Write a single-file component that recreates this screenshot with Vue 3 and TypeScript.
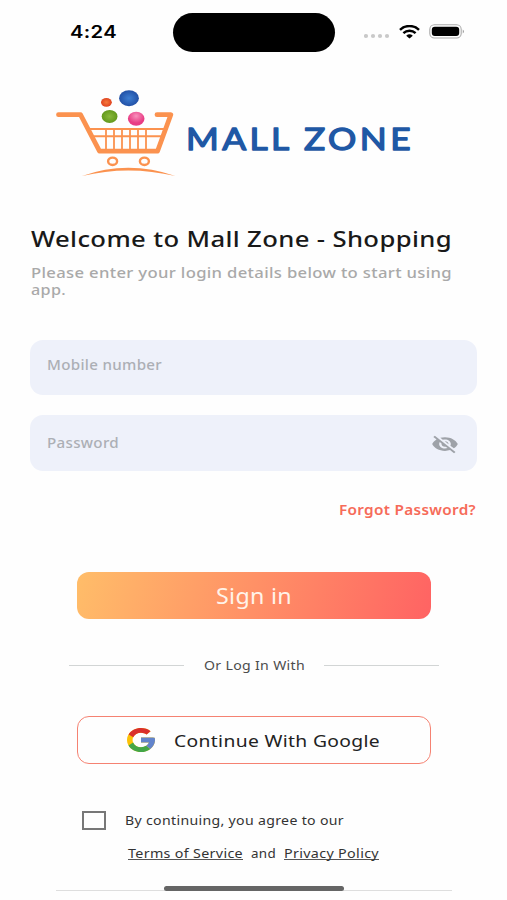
<script setup lang="ts">
import { h, ref, type FunctionalComponent } from 'vue'

interface LineProps {
  text: string
  width: number
  size: number
}

// One line of wide type: fills the given width, its baseline on the box's bottom edge.
const WideText: FunctionalComponent<LineProps> = ({ text, width, size }) =>
  h('svg', { class: 'wide', width, height: size, 'font-size': size }, [
    h('text', { x: 0, y: size, textLength: width, lengthAdjust: 'spacingAndGlyphs' }, text),
  ])
WideText.props = ['text', 'width', 'size']

const agreed = ref(false)
const signalDots = [2, 9, 16, 23]
const basketBars = [106, 114, 122, 130, 138, 146]
</script>

<template>
  <main class="screen">
    <header class="status">
      <WideText class="time" text="4:24" :width="47" :size="17" />
      <div class="island"></div>
      <svg class="dots" width="26" height="6" viewBox="0 0 26 6">
        <circle v-for="x in signalDots" :key="x" :cx="x" cy="3" r="2.1" fill="#c9c9c9" />
      </svg>
      <svg class="wifi" width="21" height="14" viewBox="0 0 21 14" fill="none" stroke="#000">
        <path d="M1 4.8C6.2-.2 14.8-.2 20 4.8" stroke-width="2.5" />
        <path d="M4.4 8.1C7.8 4.9 13.2 4.9 16.6 8.1" stroke-width="2.4" />
        <path d="M7.2 10.7Q10.5 8 13.8 10.7L10.5 13.6Z" fill="#000" stroke="none" />
      </svg>
      <svg class="battery" width="36" height="15" viewBox="0 0 36 15">
        <rect x=".8" y=".8" width="31.4" height="13.2" rx="4.6" fill="#fff" stroke="#aaa" stroke-width="1.1" />
        <rect x="2.8" y="2.7" width="27.4" height="9.4" rx="3" />
        <path d="M33.8 5.5q2 2 0 4z" fill="#888" />
      </svg>
    </header>

    <div class="brand">
      <svg width="120" height="88" viewBox="56 90 120 88" fill="none" stroke="#fb924f">
        <defs>
          <radialGradient id="blue"><stop offset="0" stop-color="#3d7ed2" /><stop offset="1" stop-color="#2150a6" /></radialGradient>
          <radialGradient id="green"><stop offset="0" stop-color="#89b83b" /><stop offset="1" stop-color="#63991c" /></radialGradient>
          <radialGradient id="pink" cy=".3"><stop offset="0" stop-color="#f891bd" /><stop offset="1" stop-color="#e83c84" /></radialGradient>
          <radialGradient id="red"><stop offset="0" stop-color="#f5793c" /><stop offset="1" stop-color="#e04420" /></radialGradient>
        </defs>
        <path d="M58.5 114.7H80.5L99.5 151.2H157.5L170.8 114.7H157" stroke-width="4.8" stroke-linecap="round" stroke-linejoin="round" />
        <path d="M90 129H165M94 136.3H162" stroke-width="1.9" />
        <path v-for="x in basketBars" :key="x" :d="`M${x} 129V150`" stroke-width="1.8" />
        <ellipse cx="112.6" cy="161.3" rx="4.5" ry="3.7" stroke-width="2.4" />
        <ellipse cx="144.4" cy="161.3" rx="4.5" ry="3.7" stroke-width="2.4" />
        <path d="M82 176Q128 159.5 175.5 176Q128 164.8 82 176Z" fill="#fb924f" stroke="none" />
        <g stroke="none">
          <ellipse cx="106.4" cy="102.3" rx="5.4" ry="4.4" fill="url(#red)" />
          <ellipse cx="129" cy="98.2" rx="9.9" ry="8" fill="url(#blue)" />
          <ellipse cx="109.6" cy="116.4" rx="7.9" ry="6.5" fill="url(#green)" />
          <ellipse cx="136.2" cy="118.8" rx="8.3" ry="7" fill="url(#pink)" />
        </g>
      </svg>
      <WideText class="name" text="MALL ZONE" :width="228" :size="31" />
    </div>

    <section class="intro">
      <h1><WideText text="Welcome to Mall Zone - Shopping" :width="421" :size="21" /></h1>
      <p>
        <WideText text="Please enter your login details below to start using" :width="421" :size="15" />
        <WideText class="second" text="app." :width="35" :size="15" />
      </p>
    </section>

    <form class="form" @submit.prevent>
      <div class="field mobile"><WideText text="Mobile number" :width="115" :size="15" /></div>
      <div class="field password">
        <WideText text="Password" :width="72" :size="15" />
        <svg class="eye" width="28" height="22" viewBox="0 0 24 24" preserveAspectRatio="none" fill="#9ea2a8">
          <path d="M12 7c2.76 0 5 2.24 5 5 0 .65-.13 1.26-.36 1.83l2.92 2.92c1.51-1.26 2.7-2.89 3.43-4.75-1.73-4.39-6-7.5-11-7.5-1.4 0-2.74.25-3.98.7l2.16 2.16C10.74 7.13 11.35 7 12 7zM2 4.27l2.28 2.28.46.46C3.08 8.3 1.78 10.02 1 12c1.73 4.39 6 7.5 11 7.5 1.55 0 3.03-.3 4.38-.84l.42.42L19.73 22 21 20.73 3.27 3 2 4.27zM7.53 9.8l1.55 1.55c-.05.21-.08.43-.08.65 0 1.66 1.34 3 3 3 .22 0 .44-.03.65-.08l1.55 1.55c-.67.33-1.41.53-2.2.53-2.76 0-5-2.24-5-5 0-.79.2-1.53.53-2.2zm4.31-.78l3.15 3.15.02-.16c0-1.66-1.34-3-3-3l-.17.01z" />
        </svg>
      </div>
      <a class="forgot"><WideText text="Forgot Password?" :width="137" :size="15" /></a>
      <button class="signin" type="submit"><WideText text="Sign in" :width="76" :size="21" /></button>
    </form>

    <div class="divider">
      <i></i>
      <WideText text="Or Log In With" :width="101" :size="13" />
      <i></i>
    </div>

    <button class="google" type="button">
      <svg width="28" height="24" viewBox="4 4 40 40" preserveAspectRatio="none">
        <path fill="#fbc108" d="M43.6 20.1H42V20H24v8h11.3C33.7 32.7 29.2 36 24 36c-6.6 0-12-5.4-12-12s5.4-12 12-12c3.1 0 5.8 1.2 8 3l5.7-5.7C34 6.1 29.3 4 24 4 13 4 4 13 4 24s9 20 20 20 20-9 20-20c0-1.3-.1-2.7-.4-3.9z" />
        <path fill="#d9302c" d="M6.3 14.7l6.6 4.8C14.7 15.1 19 12 24 12c3.1 0 5.8 1.2 8 3l5.7-5.7C34 6.1 29.3 4 24 4 16.3 4 9.7 8.3 6.3 14.7z" />
        <path fill="#43a648" d="M24 44c5.2 0 9.9-2 13.4-5.2l-6.2-5.2C29.2 35.1 26.7 36 24 36c-5.2 0-9.6-3.3-11.3-7.9l-6.5 5C9.5 39.6 16.2 44 24 44z" />
        <path fill="#6284cc" d="M43.6 20.1H42V20H24v8h11.3c-.8 2.2-2.2 4.2-4.1 5.6l6.2 5.2C37 39.2 44 34 44 24c0-1.3-.1-2.7-.4-3.9z" />
      </svg>
      <WideText text="Continue With Google" :width="206" :size="17" />
    </button>

    <div class="agree">
      <button class="check" type="button" role="checkbox" :aria-checked="agreed" @click="agreed = !agreed"></button>
      <WideText text="By continuing, you agree to our" :width="219" :size="13" />
    </div>
    <div class="links">
      <a><WideText text="Terms of Service" :width="115" :size="13" /></a>
      <WideText text="and" :width="25" :size="13" />
      <a><WideText text="Privacy Policy" :width="95" :size="13" /></a>
    </div>

    <footer class="home"><div class="handle"></div></footer>
  </main>
</template>

<style>
body {
  margin: 0;
  background: #fefefe;
}
</style>

<style scoped>
.screen {
  display: flex;
  flex-direction: column;
  box-sizing: border-box;
  width: 507px;
  height: 900px;
  overflow: hidden;
  background: #fefefe;
  color: #333;
  font-family: 'Noto Sans', 'Open Sans', sans-serif;
}
.wide {
  display: block;
  flex: none;
  overflow: visible;
  fill: currentColor;
  letter-spacing: 0.3px;
}
button {
  padding: 0;
  font: inherit;
  color: inherit;
  background: none;
}
.status {
  display: flex;
  align-items: flex-start;
  height: 52px;
  color: #000;
}
.time {
  margin: 21px 56px 0 70px;
  font-family: Inter, 'Liberation Sans', sans-serif;
  font-weight: 600;
}
.island {
  width: 161.5px;
  height: 39px;
  margin-top: 12.5px;
  border-radius: 20px;
  background: #000;
}
.dots {
  margin: 33px 0 0 29px;
}
.wifi {
  margin: 25px 0 0 9px;
}
.battery {
  margin: 24px 0 0 9px;
}
.brand {
  display: flex;
  margin: 38px 0 0 56px;
}
.name {
  margin: 29px 0 0 10px;
  color: #1f58a5;
  font-family: Lato, sans-serif;
  font-weight: 400;
  letter-spacing: 3px;
  stroke: currentColor;
  stroke-width: 1.4px;
  stroke-linejoin: round;
}
.intro {
  margin: 48px 0 0 31px;
}
h1 {
  margin: 0;
  color: #191919;
  font-weight: 500;
}
p {
  margin: 16px 0 0;
  color: #a9a9a9;
  font-weight: 500;
}
.second {
  margin-top: 2px;
}
.form {
  display: flex;
  flex-direction: column;
  margin: 45px 30px 0;
}
.field {
  display: flex;
  justify-content: space-between;
  box-sizing: border-box;
  height: 55px;
  padding: 0 18px 0 17px;
  border-radius: 13px;
  background: #eef1fa;
  color: #acafb5;
  font-weight: 500;
}
.mobile {
  padding-top: 15px;
}
.password {
  height: 56px;
  margin-top: 19.5px;
  padding-top: 18.5px;
}
.forgot {
  align-self: flex-end;
  margin: 29.5px 1px 0 0;
  color: #f66b59;
  font-weight: 600;
}
.signin {
  display: flex;
  justify-content: center;
  width: 354px;
  height: 47px;
  margin: 57px 0 0 47px;
  padding-top: 11px;
  border: 0;
  border-radius: 12px;
  background: linear-gradient(105deg, #ffbd69, #ff6363);
  color: #fff3e9;
}
.divider {
  display: flex;
  justify-content: space-between;
  width: 370px;
  margin: 38px 0 0 69px;
  color: #4c4c4c;
}
.divider i {
  width: 115px;
  height: 1px;
  margin-top: 8px;
  background: #d2d5d5;
}
.google {
  display: flex;
  box-sizing: border-box;
  width: 354px;
  height: 48px;
  margin: 46px 0 0 77px;
  padding: 11px 0 0 49px;
  gap: 19px;
  border: 1.5px solid #f58272;
  border-radius: 12px;
  color: #222;
}
.google .wide {
  margin-top: 2px;
}
.agree {
  display: flex;
  gap: 19px;
  margin: 47px 0 0 82px;
}
.agree .wide {
  margin-top: 1px;
}
.check {
  box-sizing: border-box;
  width: 23.5px;
  height: 19px;
  border: 2px solid #777;
}
.links {
  display: flex;
  gap: 8px;
  margin: 15px 0 0 128px;
}
.links a {
  height: 14px;
  border-bottom: 1px solid #555;
}
.home {
  display: flex;
  justify-content: center;
  width: 396px;
  margin: 26px 0 0 56px;
  background: linear-gradient(#dedede, #dedede) 0 4px / 100% 1px no-repeat;
}
.handle {
  width: 180px;
  height: 5px;
  border-radius: 3px;
  background: #656565;
}
</style>
